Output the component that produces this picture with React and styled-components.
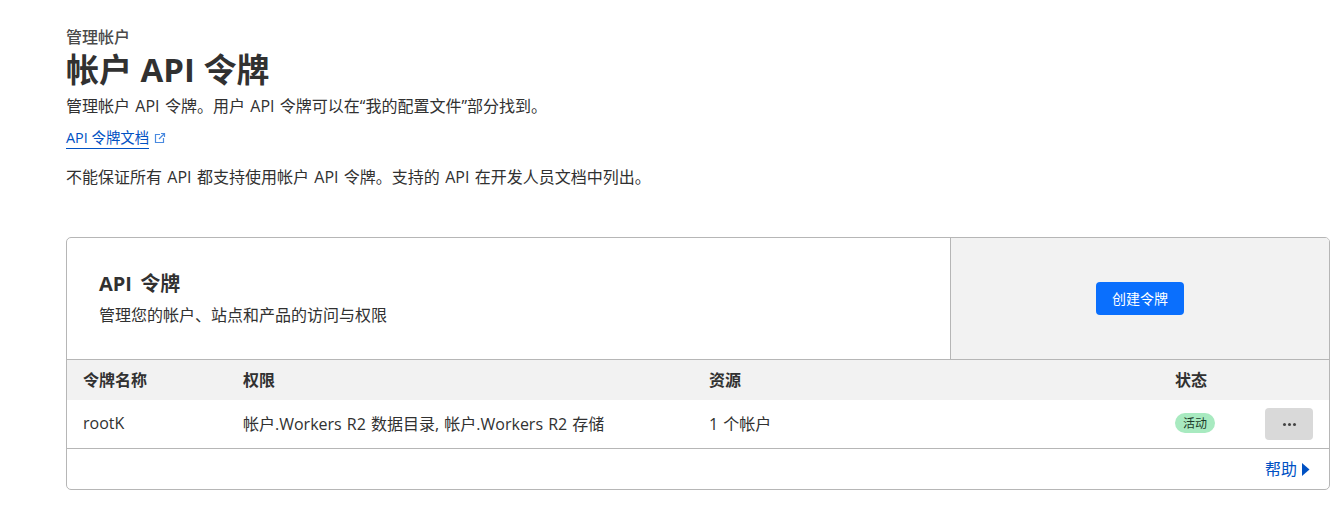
import React from 'react';
import styled, { createGlobalStyle } from 'styled-components';

const GlobalStyle = createGlobalStyle`
  html, body {
    margin: 0;
    padding: 0;
    background: #fff;
    color: #313131;
    font-family: "Open Sans", "Noto Sans CJK SC", sans-serif;
  }
`;

const Page = styled.div`
  padding: 26px 14px 21px 66px;
  height: 511px;
  box-sizing: border-box;
  overflow: hidden;
`;

const Eyebrow = styled.div`
  font-size: 16px;
  line-height: 22px;
  font-weight: 500;
  color: #4a4a4a;
`;

const Title = styled.h1`
  margin: 0;
  font-size: 33px;
  line-height: 43px;
  font-weight: 700;
  color: #313131;
`;

const Text = styled.p`
  margin: ${p => p.$margin || 0};
  font-size: 16px;
  line-height: 24px;
  word-spacing: 1.2px;
`;

const DocRow = styled.div`
  display: flex;
  align-items: center;
  gap: 5px;
  margin-top: 9px;
  height: 22px;
`;

const DocLink = styled.a`
  font-size: 14.4px;
  line-height: 20px;
  color: #0051c3;
  border-bottom: 1px solid #0051c3;
`;

const ExternalIcon = () => (
  <svg width="12" height="12" viewBox="0 0 12 12" fill="none" stroke="#4a8ae0" strokeWidth="1.2">
    <path d="M6 2.5H1.5v8h8V6" />
    <path d="M5 7l5.5-5.5M7 1.5h3.5V5" />
  </svg>
);

const Card = styled.section`
  margin-top: 48px;
  width: 1264px;
  height: 253px;
  box-sizing: border-box;
  border: 1px solid #b6b6b6;
  border-radius: 5px;
  overflow: hidden;
`;

const CardTop = styled.div`
  display: grid;
  grid-template-columns: 883px 1fr;
  height: 121px;
  border-bottom: 1px solid #b6b6b6;
`;

const Intro = styled.div`
  padding: 32px 32px 0;
`;

const IntroTitle = styled.h2`
  margin: 0;
  font-size: 20px;
  line-height: 28px;
  font-weight: 700;
  word-spacing: 3px;
`;

const ActionPane = styled.div`
  display: flex;
  align-items: center;
  justify-content: center;
  background: #f2f2f2;
  border-left: 1px solid #b6b6b6;
`;

const PrimaryButton = styled.button`
  width: 88px;
  height: 33px;
  padding: 0 0 2px;
  border: 0;
  border-radius: 4px;
  background: #0a6ffd;
  color: #fff;
  font-family: inherit;
  font-size: 14px;
`;

const TableRow = styled.div`
  display: grid;
  grid-template-columns: 160px 466px 466px 90px 1fr;
  align-items: center;
  padding-left: 16px;
  height: ${p => p.$head ? '40px' : '48px'};
  background: ${p => p.$head ? '#f2f2f2' : '#fff'};
  font-size: 16px;
  font-weight: ${p => p.$head ? 700 : 400};
  word-spacing: 1px;
  border-bottom: ${p => p.$head ? 'none' : '1px solid #b6b6b6'};
`;

const Cell = styled.span`
  display: flex;
  align-items: center;
  margin-bottom: 2px;
`;

const Badge = styled.span`
  display: inline-flex;
  align-items: center;
  justify-content: center;
  width: 40px;
  height: 20px;
  border-radius: 10px;
  background: #a8eac0;
  color: #1d3b2a;
  font-size: 12px;
`;

const MoreButton = styled.button`
  display: flex;
  align-items: center;
  justify-content: center;
  gap: 2px;
  width: 48px;
  height: 32px;
  padding: 0;
  border: 0;
  border-radius: 4px;
  background: #d9d9d9;
`;

const Dot = styled.i`
  width: 3px;
  height: 3px;
  border-radius: 50%;
  background: #444;
`;

const CardFooter = styled.div`
  display: flex;
  align-items: center;
  justify-content: flex-end;
  gap: 4px;
  height: 40px;
  padding-right: 19px;
`;

const HelpLink = styled.a`
  color: #0051c3;
  font-size: 16px;
  margin-bottom: 2px;
`;

const Caret = () => (
  <svg width="9" height="15" viewBox="0 0 9 15" fill="#0051c3">
    <path d="M1 1l7.5 6.5L1 14z" />
  </svg>
);

export default function App() {
  return (
    <Page>
      <GlobalStyle />
      <Eyebrow>管理帐户</Eyebrow>
      <Title>帐户 API 令牌</Title>
      <Text $margin="3px 0 0">管理帐户 API 令牌。用户 API 令牌可以在“我的配置文件”部分找到。</Text>
      <DocRow>
        <DocLink>API 令牌文档</DocLink>
        <ExternalIcon />
      </DocRow>
      <Text $margin="16px 0 0">不能保证所有 API 都支持使用帐户 API 令牌。支持的 API 在开发人员文档中列出。</Text>

      <Card>
        <CardTop>
          <Intro>
            <IntroTitle>API 令牌</IntroTitle>
            <Text $margin="5px 0 0">管理您的帐户、站点和产品的访问与权限</Text>
          </Intro>
          <ActionPane>
            <PrimaryButton>创建令牌</PrimaryButton>
          </ActionPane>
        </CardTop>
        <TableRow $head>
          <Cell>令牌名称</Cell>
          <Cell>权限</Cell>
          <Cell>资源</Cell>
          <Cell>状态</Cell>
          <Cell />
        </TableRow>
        <TableRow>
          <Cell>rootK</Cell>
          <Cell>帐户.Workers R2 数据目录, 帐户.Workers R2 存储</Cell>
          <Cell>1 个帐户</Cell>
          <Cell><Badge>活动</Badge></Cell>
          <MoreButton><Dot /><Dot /><Dot /></MoreButton>
        </TableRow>
        <CardFooter>
          <HelpLink>帮助</HelpLink>
          <Caret />
        </CardFooter>
      </Card>
    </Page>
  );
}
